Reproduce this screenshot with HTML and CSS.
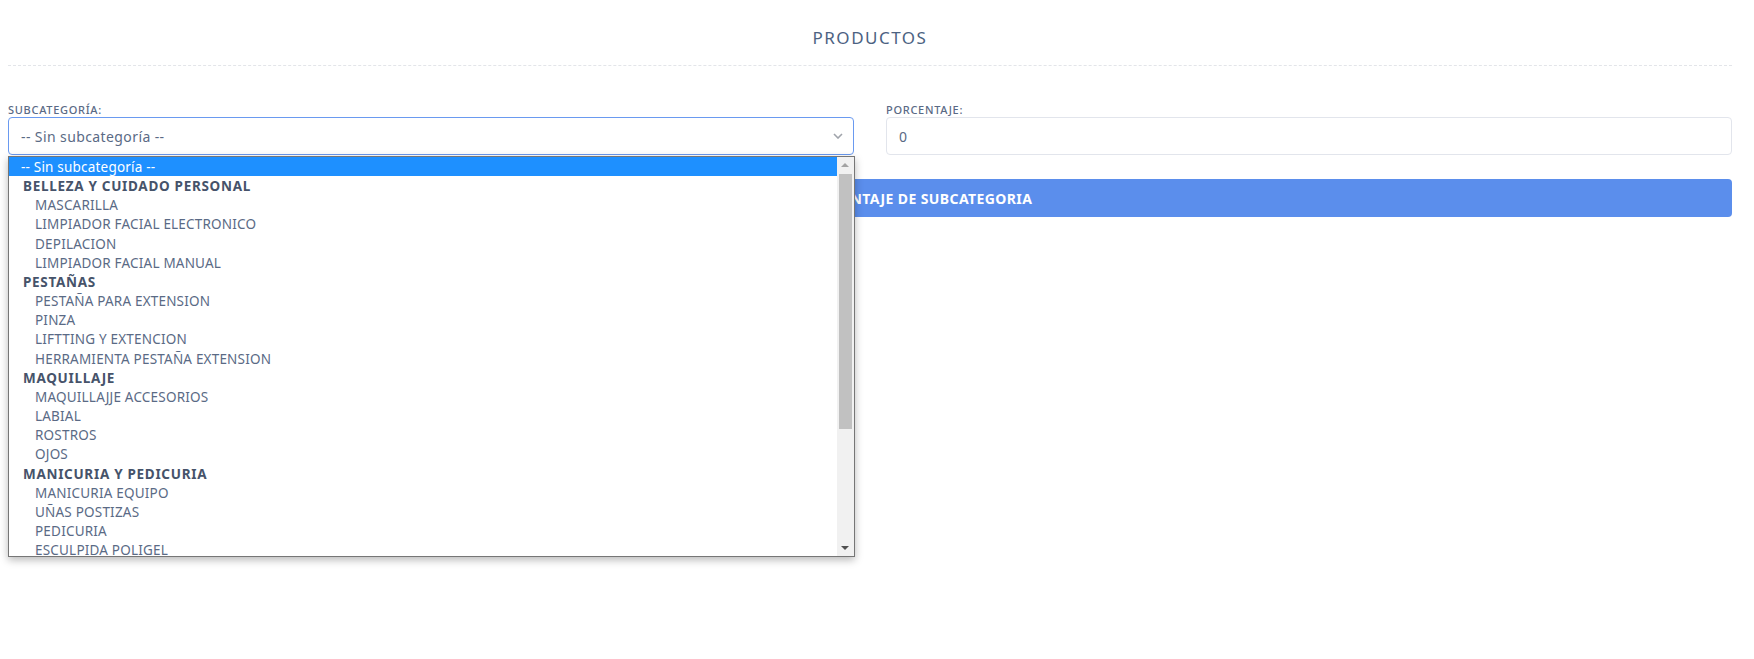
FILE: index.html
```html
<!DOCTYPE html>
<html lang="es">
<head>
<meta charset="utf-8">
<title>Productos</title>
<link rel="stylesheet" href="styles.css">
</head>
<body>
<div class="page">
  <h1 class="title">PRODUCTOS</h1>
  <div class="sep"></div>
  <div class="form-row">
    <div class="field field-sub">
      <label class="lbl">SUBCATEGORÍA:</label>
      <div class="select">
        <span class="select-text">-- Sin subcategoría --</span>
        <svg class="chev" width="10" height="6" viewBox="0 0 10 6"><path d="M1 1 L5 5 L9 1" fill="none" stroke="#a0a4ab" stroke-width="1.6"/></svg>
      </div>
      <div class="dropdown">
        <div class="list">
          <div class="opt opt-top selected">-- Sin subcategoría --</div>
          <div class="grp">BELLEZA Y CUIDADO PERSONAL</div>
          <div class="opt">MASCARILLA</div>
          <div class="opt">LIMPIADOR FACIAL ELECTRONICO</div>
          <div class="opt">DEPILACION</div>
          <div class="opt">LIMPIADOR FACIAL MANUAL</div>
          <div class="grp">PESTAÑAS</div>
          <div class="opt">PESTAÑA PARA EXTENSION</div>
          <div class="opt">PINZA</div>
          <div class="opt">LIFTTING Y EXTENCION</div>
          <div class="opt">HERRAMIENTA PESTAÑA EXTENSION</div>
          <div class="grp">MAQUILLAJE</div>
          <div class="opt">MAQUILLAJJE ACCESORIOS</div>
          <div class="opt">LABIAL</div>
          <div class="opt">ROSTROS</div>
          <div class="opt">OJOS</div>
          <div class="grp">MANICURIA Y PEDICURIA</div>
          <div class="opt">MANICURIA EQUIPO</div>
          <div class="opt">UÑAS POSTIZAS</div>
          <div class="opt">PEDICURIA</div>
          <div class="opt">ESCULPIDA POLIGEL</div>
        </div>
        <div class="sbar">
          <div class="arrow arrow-up"></div>
          <div class="thumb-area"><div class="thumb"></div></div>
          <div class="arrow arrow-down"></div>
        </div>
      </div>
    </div>
    <div class="field">
      <label class="lbl">PORCENTAJE:</label>
      <div class="input">0</div>
    </div>
  </div>
  <button class="btn">ACTUALIZAR PORCENTAJE DE SUBCATEGORIA</button>
</div>
</body>
</html>
```

FILE: styles.css
```css
* { box-sizing: border-box; }
html, body { margin: 0; padding: 0; background: #fff; }
body {
  font-family: "Noto Sans", "Open Sans", sans-serif;
  color: #5a6a85;
  min-height: 659px;
}
.page {
  width: 1724px;
  margin-left: 8px;
  padding-top: 24px;
  min-height: 659px;
}
.title {
  margin: 0;
  text-align: center;
  font-size: 17px;
  font-weight: 400;
  letter-spacing: 1.5px;
  line-height: 28px;
  color: #4c6282;
}
.sep {
  margin-top: 13px;
  border-top: 1px dashed #e3e5e9;
  height: 0;
}
.form-row {
  display: grid;
  grid-template-columns: 846px 846px;
  column-gap: 32px;
  margin-top: 37px;
}
.field { position: relative; display: flex; flex-direction: column; }
.lbl {
  display: block;
  font-size: 11px;
  font-weight: 500;
  line-height: 14px;
  height: 14px;
  color: #5a6a85;
  letter-spacing: 0.7px;
}
.select, .input {
  height: 38px;
  border-radius: 4px;
  display: flex;
  align-items: center;
  padding: 0 12px;
  font-size: 14px;
  letter-spacing: 0.4px;
  color: #5a6a85;
}
.select {
  border: 1px solid #6a9af0;
  justify-content: space-between;
}
.chev { margin-right: -2px; }
.input {
  border: 1px solid #e2e5ec;
  padding-left: 12px;
}
.dropdown {
  position: absolute;
  left: 0;
  top: 53px;
  width: 847px;
  height: 401px;
  background: #fff;
  border: 1px solid #767676;
  box-shadow: 0 3px 8px rgba(0,0,0,0.28);
  display: flex;
  overflow: hidden;
  z-index: 5;
}
.list { flex: 1; overflow: hidden; }
.opt, .grp {
  height: 19.17px;
  line-height: 18.17px;
  padding-top: 1px;
  font-size: 13.5px;
  letter-spacing: 0.2px;
  white-space: nowrap;
}
.opt { padding-left: 26px; color: #5a6a85; }
.opt-top { padding-left: 12px; }
.selected { background: #1e90ff; color: #fff; }
.grp { padding-left: 14px; font-weight: 700; color: #46536a; letter-spacing: 0.7px; }
.sbar {
  width: 17px;
  background: #f1f1f1;
  display: flex;
  flex-direction: column;
  align-items: center;
}
.arrow { width: 17px; height: 17px; position: relative; }
.arrow-up::after, .arrow-down::after {
  content: "";
  position: absolute;
  left: 4px;
  width: 0; height: 0;
  border-left: 4px solid transparent;
  border-right: 4px solid transparent;
}
.arrow-up::after { top: 6px; border-bottom: 4px solid #a3a3a3; }
.arrow-down::after { top: 7px; border-top: 4px solid #505050; }
.thumb-area { flex: 1; width: 17px; padding: 0 2px; }
.thumb { height: 255px; background: #c1c1c1; }
.btn {
  display: block;
  width: 100%;
  height: 38px;
  margin-top: 24px;
  border: none;
  border-radius: 4px;
  background: #5b8eec;
  color: #fff;
  font-family: inherit;
  font-size: 14px;
  letter-spacing: 0.4px;
  font-weight: 700;
}
```
